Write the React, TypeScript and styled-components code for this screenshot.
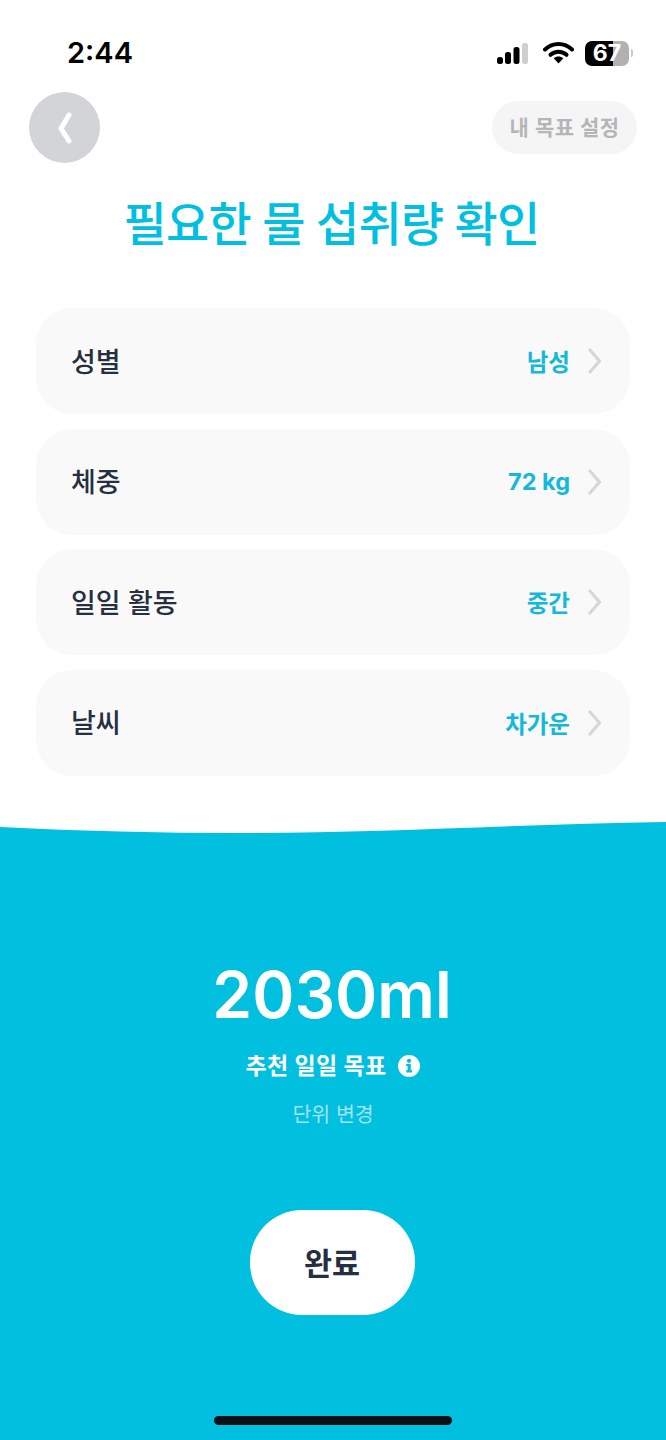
import React from 'react';
import styled, { createGlobalStyle } from 'styled-components';

const GlobalStyle = createGlobalStyle`
  html, body {
    margin: 0;
    padding: 0;
    background: #fff;
  }
  * {
    box-sizing: border-box;
  }
`;

const fontStack = `Inter, 'Noto Sans CJK KR', sans-serif`;
const cyan = '#00bfdf';

const Screen = styled.div`
  width: 666px;
  height: 1440px;
  display: flex;
  flex-direction: column;
  overflow: hidden;
  background: #fff;
  font-family: ${fontStack};
`;

const StatusBar = styled.div`
  height: 92px;
  padding: 35px 33px 0 67px;
  display: flex;
  justify-content: space-between;
  align-items: flex-start;
`;

const Time = styled.span`
  font-size: 29px;
  line-height: 36px;
  font-weight: 600;
  color: #000;
`;

const StatusIcons = styled.div`
  display: flex;
  align-items: center;
  gap: 11px;
  height: 36px;
`;

const SignalGap = styled.div`
  display: flex;
  align-items: center;
  gap: 15px;
`;

const BatteryWrap = styled.div`
  display: flex;
  align-items: center;
  gap: 2px;
`;

const Battery = styled.div`
  width: 44px;
  height: 25px;
  border-radius: 7px;
  background: linear-gradient(to right, #000 0, #000 64%, #b1b1b1 64%, #b1b1b1 100%);
  color: #fff;
  font-size: 23px;
  font-weight: 700;
  line-height: 25px;
  text-align: center;
`;

const BatteryCap = styled.div`
  width: 2px;
  height: 8px;
  border-radius: 0 2px 2px 0;
  background: #c8c8c8;
`;

const Header = styled.div`
  height: 71px;
  padding: 0 29px;
  display: flex;
  justify-content: space-between;
  align-items: center;
`;

const BackButton = styled.div`
  width: 71px;
  height: 71px;
  border-radius: 50%;
  background: #d2d4d8;
  display: flex;
  align-items: center;
  justify-content: center;
`;

const GoalPill = styled.div`
  width: 145px;
  height: 53px;
  border-radius: 27px;
  background: #f6f5f6;
  color: #b5b5b7;
  font-size: 21px;
  font-weight: 600;
  letter-spacing: 0.4px;
  padding-bottom: 3px;
  display: flex;
  align-items: center;
  justify-content: center;
`;

const Title = styled.h1`
  margin: 32px 0 55px;
  padding-right: 3px;
  height: 58px;
  font-size: 47px;
  line-height: 58px;
  font-weight: 500;
  letter-spacing: -0.8px;
  word-spacing: -0.4px;
  color: ${cyan};
  text-align: center;
`;

const RowList = styled.div`
  padding: 0 36px;
  display: flex;
  flex-direction: column;
  gap: 14.6px;
`;

const Row = styled.div`
  height: 106px;
  border-radius: 36px;
  background: #f9f9fa;
  padding: 0 28px 0 35px;
  display: flex;
  align-items: center;
  justify-content: space-between;
`;

const RowLabel = styled.span`
  font-size: 27px;
  font-weight: 500;
  color: #262f40;
  margin-bottom: 2px;
`;

const RowValue = styled.div`
  display: flex;
  align-items: center;
  gap: 18px;
`;

const ValueText = styled.span`
  font-size: 23.5px;
  font-weight: 700;
  color: #14b8d8;
`;

const Bottom = styled.div`
  flex: 1;
  margin-top: 46px;
  display: flex;
  flex-direction: column;
  align-items: center;
`;

const Wave = styled.svg`
  display: block;
  flex: none;
  width: 666px;
  height: 12px;
`;

const WaterPanel = styled.div`
  flex: 1;
  align-self: stretch;
  background: ${cyan};
  display: flex;
  flex-direction: column;
  align-items: center;
  padding-top: 121px;
`;

const Amount = styled.div`
  font-size: 64px;
  line-height: 80px;
  font-weight: 600;
  color: #fff;
  margin-right: 2px;
`;

const GoalLine = styled.div`
  margin-top: 14px;
  display: flex;
  align-items: center;
  gap: 12px;
  font-size: 23px;
  line-height: 34px;
  font-weight: 600;
  letter-spacing: 0.3px;
  color: #fff;
`;

const UnitLink = styled.div`
  margin-top: 17px;
  font-size: 20.5px;
  line-height: 30px;
  color: #a3e2f1;
`;

const DoneButton = styled.div`
  margin: 80px 2px 0 0;
  width: 165px;
  height: 105px;
  border-radius: 52px;
  background: #fff;
  color: #262f40;
  font-size: 30.5px;
  font-weight: 700;
  display: flex;
  align-items: center;
  justify-content: center;
`;

const HomeBar = styled.div`
  margin-top: 101px;
  width: 238px;
  height: 9px;
  border-radius: 5px;
  background: #0d1016;
`;

const Signal = () => (
  <svg width="31" height="24" viewBox="0 0 31 24">
    <rect x="0" y="16" width="6" height="7" rx="2.5" fill="#000" />
    <rect x="8" y="11" width="6" height="12" rx="2.5" fill="#000" />
    <rect x="16.5" y="6" width="6" height="17" rx="2.5" fill="#000" />
    <rect x="25" y="2" width="6" height="21" rx="2.5" fill="#cfcfcf" />
  </svg>
);

const Wifi = () => (
  <svg width="31" height="24" viewBox="0 0 31 24" fill="none">
    <path d="M2 8.5C9.6 1.2 21.4 1.2 29 8.5" stroke="#000" strokeWidth="4" strokeLinecap="round" />
    <path d="M7.5 13.8C12 9.6 19 9.6 23.5 13.8" stroke="#000" strokeWidth="4" strokeLinecap="round" />
    <path d="M10.7 17.3C13.4 14.8 17.6 14.8 20.3 17.3L15.5 22.5Z" fill="#000" />
  </svg>
);

const BackChevron = () => (
  <svg width="16" height="32" viewBox="0 0 16 32" fill="none">
    <path d="M12 3L4 16.5L12 29" stroke="#fff" strokeWidth="5" strokeLinecap="round" strokeLinejoin="round" />
  </svg>
);

const RowChevron = () => (
  <svg width="14" height="26" viewBox="0 0 14 26" fill="none">
    <path d="M2 2L11.5 13L2 24" stroke="#d6d7da" strokeWidth="3.2" strokeLinecap="round" strokeLinejoin="round" />
  </svg>
);

const InfoIcon = () => (
  <svg width="22" height="22" viewBox="0 0 21 21">
    <circle cx="10.5" cy="10.5" r="10.5" fill="#fff" />
    <circle cx="10.5" cy="5.6" r="2" fill={cyan} />
    <path d="M7.8 8.6H12.2V14.6H13.6V16.6H7.8V14.6H9.2V10.6H7.8Z" fill={cyan} />
  </svg>
);

const rows = [
  { label: '성별', value: '남성' },
  { label: '체중', value: '72 kg' },
  { label: '일일 활동', value: '중간' },
  { label: '날씨', value: '차가운' },
];

function App() {
  return (
    <>
      <GlobalStyle />
      <Screen>
        <StatusBar>
          <Time>2:44</Time>
          <StatusIcons>
            <SignalGap>
              <Signal />
              <Wifi />
            </SignalGap>
            <BatteryWrap>
              <Battery>67</Battery>
              <BatteryCap />
            </BatteryWrap>
          </StatusIcons>
        </StatusBar>
        <Header>
          <BackButton>
            <BackChevron />
          </BackButton>
          <GoalPill>내 목표 설정</GoalPill>
        </Header>
        <Title>필요한 물 섭취량 확인</Title>
        <RowList>
          {rows.map((row) => (
            <Row key={row.label}>
              <RowLabel>{row.label}</RowLabel>
              <RowValue>
                <ValueText>{row.value}</ValueText>
                <RowChevron />
              </RowValue>
            </Row>
          ))}
        </RowList>
        <Bottom>
          <Wave viewBox="0 0 666 12" preserveAspectRatio="none">
            <path d="M0 5C80 9 160 11 240 11C380 11 520 2 666 0V12H0Z" fill={cyan} />
          </Wave>
          <WaterPanel>
            <Amount>2030ml</Amount>
            <GoalLine>
              추천 일일 목표
              <InfoIcon />
            </GoalLine>
            <UnitLink>단위 변경</UnitLink>
            <DoneButton>완료</DoneButton>
            <HomeBar />
          </WaterPanel>
        </Bottom>
      </Screen>
    </>
  );
}

export default App;
